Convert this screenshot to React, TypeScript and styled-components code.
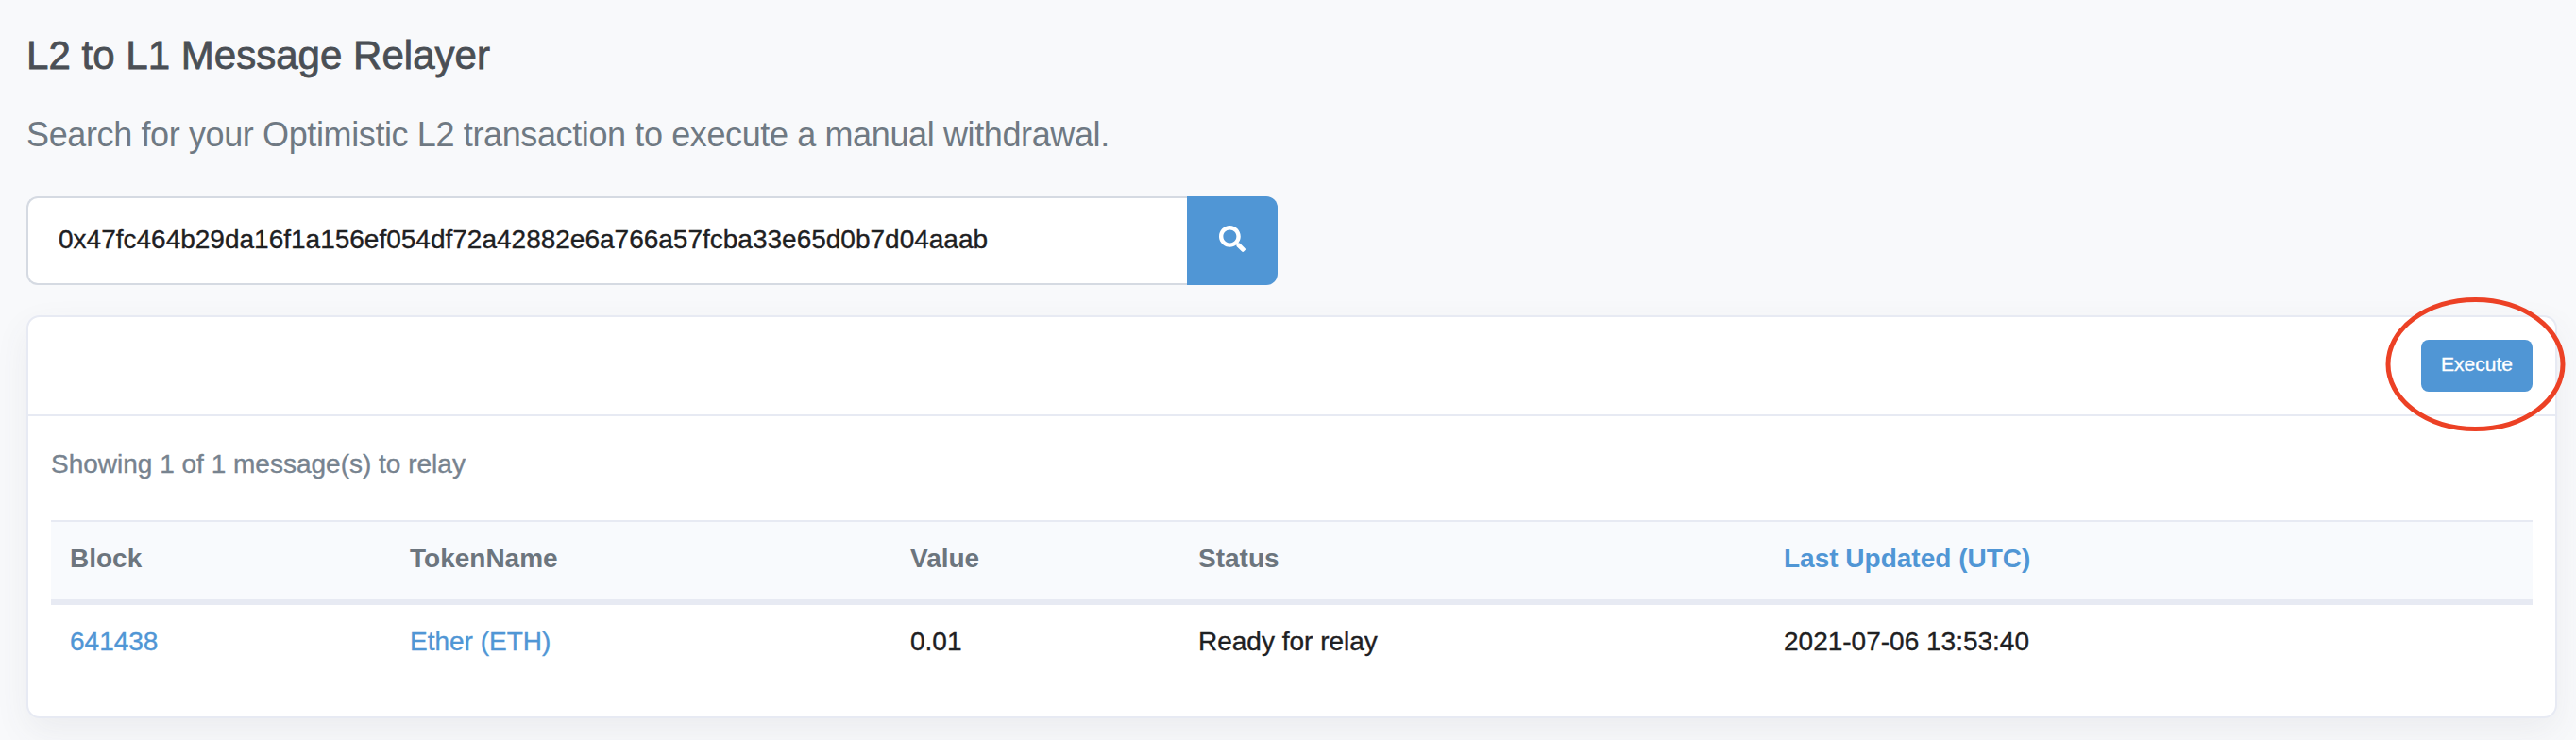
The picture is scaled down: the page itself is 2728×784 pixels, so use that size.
import React from "react";
import styled, { createGlobalStyle } from "styled-components";
import { FaSearch } from "react-icons/fa";

const GlobalStyle = createGlobalStyle`
  *, *::before, *::after { box-sizing: border-box; }
  html, body { margin: 0; background: #f8f9fb; }
  body {
    font-family: "Liberation Sans", Arial, Helvetica, sans-serif;
    font-size: 28px;
    line-height: 42px;
    color: #1e2022;
    -webkit-text-stroke-width: 0.35px;
    overflow: hidden;
  }
`;

const Page = styled.main`
  position: relative;
  height: 784px;
  padding: 31px 20px 0 28px;
  overflow: hidden;
`;

const Title = styled.h1`
  margin: 0 0 29px;
  font-size: 42px;
  line-height: 56px;
  font-weight: 400;
  letter-spacing: 0.03px;
  color: #4a4f55;
  -webkit-text-stroke-width: 0.8px;
`;

const Lead = styled.p`
  margin: 0 0 38px;
  font-size: 36px;
  line-height: 54px;
  letter-spacing: -0.38px;
  color: #6f7983;
  -webkit-text-stroke-width: 0;
`;

const SearchForm = styled.form`
  display: flex;
  width: 1325px;
  height: 94px;
  margin-bottom: 32px;
`;

const SearchInput = styled.input`
  flex: 1;
  min-width: 0;
  padding: 0 32px 2px;
  border: 2px solid #d5dae2;
  border-right: 0;
  border-radius: 12px 0 0 12px;
  background: #fff;
  font: inherit;
  color: #1e2022;
  outline: none;
`;

const SearchButton = styled.button`
  display: flex;
  align-items: center;
  justify-content: center;
  width: 96px;
  padding: 0 0 5px;
  border: 0;
  border-radius: 0 12px 12px 0;
  background: #5096d5;
  color: #fff;
  font-size: 28px;
`;

const Card = styled.section`
  height: 427px;
  border: 2px solid #e7eaf3;
  border-radius: 14px;
  background: #fff;
  box-shadow: 0 14px 36px rgba(82, 85, 92, 0.075);
`;

const CardHeader = styled.header`
  display: flex;
  justify-content: flex-end;
  height: 105px;
  padding: 24px 24px 0;
  border-bottom: 2px solid #e7eaf3;
`;

const ExecuteButton = styled.button`
  width: 118px;
  height: 55px;
  padding: 0 0 3px;
  border: 0;
  border-radius: 8px;
  background: #5096d5;
  color: #fff;
  font: 21px "Liberation Sans", Arial, sans-serif;
`;

const CardBody = styled.div`
  padding: 30px 24px 0;
`;

const Summary = styled.p`
  margin: 0 0 38px;
  color: #77838f;
`;

const Table = styled.table`
  width: 100%;
  table-layout: fixed;
  border-collapse: separate;
  border-spacing: 0;
`;

const Column = styled.col<{ $width?: number }>`
  width: ${({ $width }) => ($width ? `${$width}px` : "auto")};
`;

const HeadCell = styled.th<{ $sortable?: boolean }>`
  height: 90px;
  padding: 18px 20px 22px;
  border-top: 2px solid #e7eaf3;
  border-bottom: 6px solid #e7eaf3;
  background: #f8fafd;
  text-align: left;
  font-weight: 700;
  -webkit-text-stroke-width: 0;
  color: ${({ $sortable }) => ($sortable ? "#5096d5" : "#6c757e")};
`;

const Cell = styled.td`
  padding: 18px 20px;
`;

const Link = styled.a`
  color: #5096d5;
  text-decoration: none;
`;

const Highlight = styled.svg`
  position: absolute;
  top: 314px;
  right: 10px;
  width: 192px;
  height: 144px;
  pointer-events: none;
`;

export default function App() {
  return (
    <Page>
      <GlobalStyle />
      <Title>L2 to L1 Message Relayer</Title>
      <Lead>Search for your Optimistic L2 transaction to execute a manual withdrawal.</Lead>
      <SearchForm onSubmit={(event) => event.preventDefault()}>
        <SearchInput
          aria-label="Transaction hash"
          spellCheck={false}
          defaultValue="0x47fc464b29da16f1a156ef054df72a42882e6a766a57fcba33e65d0b7d04aaab"
        />
        <SearchButton aria-label="Search">
          <FaSearch />
        </SearchButton>
      </SearchForm>
      <Card>
        <CardHeader>
          <ExecuteButton type="button">Execute</ExecuteButton>
        </CardHeader>
        <CardBody>
          <Summary>Showing 1 of 1 message(s) to relay</Summary>
          <Table>
            <colgroup>
              <Column $width={360} />
              <Column $width={530} />
              <Column $width={305} />
              <Column $width={620} />
              <Column />
            </colgroup>
            <thead>
              <tr>
                <HeadCell>Block</HeadCell>
                <HeadCell>TokenName</HeadCell>
                <HeadCell>Value</HeadCell>
                <HeadCell>Status</HeadCell>
                <HeadCell $sortable>Last Updated (UTC)</HeadCell>
              </tr>
            </thead>
            <tbody>
              <tr>
                <Cell><Link>641438</Link></Cell>
                <Cell><Link>Ether (ETH)</Link></Cell>
                <Cell>0.01</Cell>
                <Cell>Ready for relay</Cell>
                <Cell>2021-07-06 13:53:40</Cell>
              </tr>
            </tbody>
          </Table>
        </CardBody>
      </Card>
      <Highlight viewBox="0 0 192 144" aria-hidden="true">
        <ellipse cx="95.5" cy="72" rx="92.5" ry="68.5" fill="none" stroke="#ec4125" strokeWidth="5" />
      </Highlight>
    </Page>
  );
}
